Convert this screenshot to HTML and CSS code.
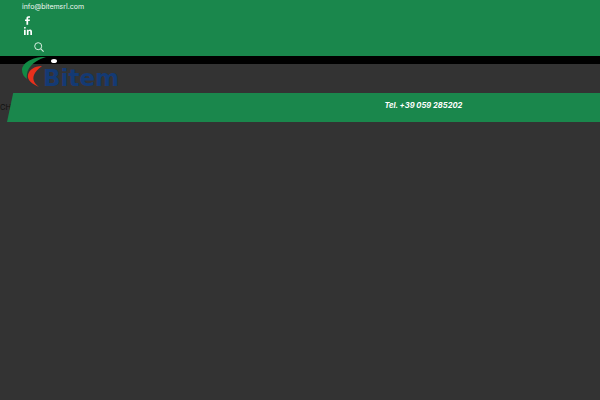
FILE: index.html
```html
<!DOCTYPE html>
<html lang="en">
<head>
  <meta charset="UTF-8" />
  <title>Bitem</title>
  <link rel="stylesheet" href="styles.css">
</head>
<body>
  <div class="topbar">
    <a class="mail">info@bitemsrl.com</a>
    <div class="social">
      <svg class="fb" width="5" height="9" viewBox="0 0 6 10"><path d="M1.700 10V5.600H0V3.800h1.700V2.500C1.700.9 2.700 0 4.200 0H6v1.800H4.800c-.8 0-1 .4-1 1v1H6l-.3 1.800H3.800V10z" fill="#fff"/></svg>
      <svg class="in" width="8" height="8" viewBox="0 0 9 9"><path d="M0 3h1.900v6H0zM0 .9a1 1 0 1 1 2 0 1 1 0 0 1-2 0zM3.200 3H5v.8c.4-.6 1-1 1.900-1C8.500 2.800 9 3.900 9 5.400V9H7.100V5.800c0-.8-.2-1.400-.9-1.400-.8 0-1.100.6-1.100 1.400V9H3.200z" fill="#fff"/></svg>
    </div>
    <svg class="search" width="10" height="10" viewBox="0 0 10 10"><circle cx="4.200" cy="4.200" r="3.500" fill="none" stroke="#d9f0e2" stroke-width="1"/><path d="M6.800 6.800L9.600 9.600" stroke="#d9f0e2" stroke-width="1.100"/></svg>
  </div>
  <div class="blackbar"></div>
  <div class="main">
    <div class="logo">
      <svg class="swoosh" width="36" height="36" viewBox="0 0 36 36">
        <path d="M24 1C13 0 0 6 0 14c0 4 2 7 5 9-1-8 3-17 19-22z" fill="#118a45"/>
        <path d="M20 9c-8 0-13 4-14 9-1 5 4 9 11 12-4-3-7-7-5-12 1-3 4-6 8-9z" fill="#e8301c" transform="translate(0 1)"/>
        <ellipse cx="32" cy="5" rx="3" ry="2" fill="#fff"/>
      </svg>
      <span class="logo-text">Bitem</span>
    </div>
    <div class="band-row">
      <span class="cut-text">CH</span>
      <div class="band"><span class="tel">Tel. +39 059 285202</span></div>
    </div>
  </div>
</body>
</html>
```

FILE: styles.css
```css
html, body {
  margin: 0;
  height: 100%;
  overflow: hidden;
}

body {
  font-family: Inter, "Open Sans", sans-serif;
  background: #333333;
}

.topbar {
  height: 56px;
  box-sizing: border-box;
  background: #1a874c;
  padding: 2px 0 0 22px;
}

.mail {
  display: block;
  color: #eef7f1;
  font-size: 7px;
  line-height: 10px;
}

.social {
  display: flex;
  flex-direction: column;
  margin-top: 4px;
  gap: 2px;
}

.fb {
  margin-left: 3px;
}

.in {
  margin-left: 2px;
}

.search {
  display: block;
  margin: 7px 0 0 12px;
}

.blackbar {
  height: 8px;
  background: #000000;
}

.main {
  position: relative;
}

.logo {
  position: absolute;
  left: 22px;
  top: -8px;
  display: flex;
}

.logo-text {
  margin: 9px 0 0 -15px;
  font-family: "DejaVu Sans", sans-serif;
  font-size: 23px;
  line-height: 26px;
  font-weight: bold;
  color: #143a74;
}

.band-row {
  display: flex;
  padding-top: 29px;
  overflow: hidden;
}

.cut-text {
  width: 7px;
  flex: none;
  margin-top: 10px;
  white-space: nowrap;
  font-size: 7.500px;
  line-height: 9px;
  color: #111111;
}

.band {
  flex: 1;
  height: 29px;
  margin-right: -12px;
  background: #1a874c;
  transform: skewX(-12deg);
  transform-origin: bottom left;
  display: flex;
  align-items: center;
}

.tel {
  margin: 0 0 4px 374px;
  transform: skewX(12deg);
  color: #ffffff;
  font-size: 7.600px;
  font-style: italic;
  font-weight: 700;
}
```
